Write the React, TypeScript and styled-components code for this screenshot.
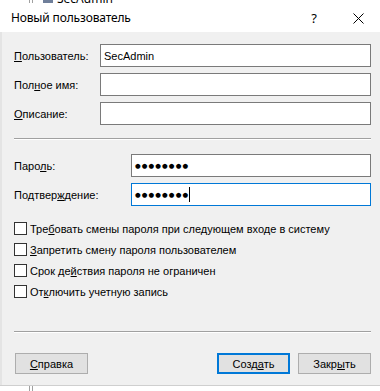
import React from "react";
import styled, { createGlobalStyle } from "styled-components";

const Global = createGlobalStyle`
  html, body { margin: 0; padding: 0; background: #ffffff; }
  body { width: 380px; height: 391px; overflow: hidden; }
  #root { width: 380px; }
`;

const Page = styled.div`
  width: 380px;
  height: 391px;
  display: flex;
  flex-direction: column;
  background: #ffffff;
  overflow: hidden;
`;

const BackStrip = styled.div<{ $h: number }>`
  height: ${(p) => p.$h}px;
  flex: none;
  display: flex;
  align-items: flex-end;
  overflow: hidden;
  background: #ffffff;
`;

const TreeLines = styled.div`
  width: 4px;
  height: 12px;
  margin-left: 29px;
  border-left: 1px solid #a0a0a0;
  border-right: 1px solid #a0a0a0;
  box-sizing: border-box;
  flex: none;
`;

const BackIcon = styled.div`
  width: 10px;
  height: 12px;
  margin-left: 10px;
  background: #6f7f9a;
  flex: none;
`;

const BackText = styled.span`
  font-family: "Noto Sans", sans-serif;
  font-size: 12px;
  line-height: 12px;
  color: #000;
  margin-left: 4px;
  margin-bottom: -2px;
`;

const Dialog = styled.div`
  flex: none;
  display: flex;
  flex-direction: column;
`;

const TitleBar = styled.div`
  height: 29px;
  display: flex;
  align-items: center;
  background: #ffffff;
  padding-left: 11px;
`;

const Title = styled.div`
  flex: 1;
  font-family: "Noto Sans", sans-serif;
  font-size: 12px;
  color: #000;
  letter-spacing: -0.15px;
`;

const TitleButton = styled.div`
  width: 44px;
  height: 29px;
  display: flex;
  align-items: center;
  justify-content: center;
  font-family: "Noto Sans", sans-serif;
  font-size: 13px;
  color: #000;
  padding-top: 1px;
  box-sizing: border-box;
`;

const Body = styled.div`
  background: #f0f0f0;
  border-left: 2px solid #e4e4e4;
  padding: 12px 9px 11px 12px;
  display: flex;
  flex-direction: column;
  font-family: "Liberation Sans", Arial, sans-serif;
  font-size: 11px;
  color: #000;
`;

const FormGrid = styled.div<{ $label: number }>`
  display: grid;
  grid-template-columns: ${(p) => p.$label}px 1fr;
  row-gap: 6px;
  align-items: center;
`;

const Label = styled.label`
  white-space: nowrap;
`;

const Field = styled.div<{ $focused?: boolean }>`
  height: 23px;
  box-sizing: border-box;
  border: 1px solid ${(p) => (p.$focused ? "#0078d7" : "#7a7a7a")};
  background: #ffffff;
  display: flex;
  align-items: center;
  padding-left: 3px;
  white-space: nowrap;
`;

const Dots = styled.span`
  font-family: "DejaVu Sans", sans-serif;
  font-size: 6.5px;
  letter-spacing: 1.1px;
  color: #000;
`;

const Caret = styled.span`
  display: inline-block;
  width: 1px;
  height: 15px;
  background: #000;
`;

const Separator = styled.div<{ $top: number; $bottom: number }>`
  height: 0;
  border-top: 1px solid #a0a0a0;
  border-bottom: 1px solid #ffffff;
  margin: ${(p) => p.$top}px 0 ${(p) => p.$bottom}px 0;
`;

const CheckList = styled.div`
  display: flex;
  flex-direction: column;
  gap: 8px;
  margin-top: 16px;
`;

const CheckRow = styled.div`
  display: flex;
  align-items: center;
  height: 13px;
  gap: 3px;
  white-space: nowrap;
`;

const Box = styled.span`
  width: 13px;
  height: 13px;
  box-sizing: border-box;
  border: 1px solid #333333;
  background: #ffffff;
  flex: none;
`;

const ButtonRow = styled.div`
  display: flex;
  align-items: center;
  padding-left: 1px;
`;

const Spacer = styled.div`
  flex: 1;
`;

const Button = styled.div<{ $default?: boolean; $first?: boolean }>`
  width: 73px;
  height: 21px;
  box-sizing: border-box;
  background: #e1e1e1;
  border: ${(p) => (p.$default ? "2px solid #0078d7" : "1px solid #adadad")};
  display: flex;
  align-items: center;
  justify-content: center;
  margin-left: ${(p) => (p.$default || p.$first ? 0 : 8)}px;
  font-size: 11px;
`;

const BottomShadow = styled.div`
  height: 1px;
  background: #cfcfcf;
  flex: none;
`;

const U = styled.span`
  text-decoration: underline;
  text-underline-offset: 1px;
`;

export default function App() {
  return (
    <Page>
      <Global />
      <BackStrip $h={3}>
        <TreeLines />
        <BackIcon />
        <BackText>SecAdmin</BackText>
      </BackStrip>
      <Dialog>
        <TitleBar>
          <Title>Новый пользователь</Title>
          <TitleButton>?</TitleButton>
          <TitleButton>
            <svg width="11" height="11" viewBox="0 0 11 11">
              <path d="M0.5 0.5 L10.5 10.5 M10.5 0.5 L0.5 10.5" stroke="#000" strokeWidth="1" fill="none" />
            </svg>
          </TitleButton>
        </TitleBar>
        <Body>
          <FormGrid $label={86}>
            <Label>
              <U>П</U>ользователь:
            </Label>
            <Field>SecAdmin</Field>
            <Label>
              Пол<U>н</U>ое имя:
            </Label>
            <Field />
            <Label>
              <U>О</U>писание:
            </Label>
            <Field />
          </FormGrid>
          <Separator $top={13} $bottom={14} />
          <FormGrid $label={117}>
            <Label>
              Паро<U>л</U>ь:
            </Label>
            <Field>
              <Dots>●●●●●●●●</Dots>
            </Field>
            <Label>
              Подтвер<U>ж</U>дение:
            </Label>
            <Field $focused>
              <Dots>●●●●●●●●</Dots>
              <Caret />
            </Field>
          </FormGrid>
          <CheckList>
            <CheckRow>
              <Box />
              <span>
                Тре<U>б</U>овать смены пароля при следующем входе в систему
              </span>
            </CheckRow>
            <CheckRow>
              <Box />
              <span>
                <U>З</U>апретить смену пароля пользователем
              </span>
            </CheckRow>
            <CheckRow>
              <Box />
              <span>
                Срок де<U>й</U>ствия пароля не ограничен
              </span>
            </CheckRow>
            <CheckRow>
              <Box />
              <span>
                От<U>к</U>лючить учетную запись
              </span>
            </CheckRow>
          </CheckList>
          <Separator $top={33} $bottom={20} />
          <ButtonRow>
            <Button $first>
              <span>
                <U>С</U>правка
              </span>
            </Button>
            <Spacer />
            <Button $default>
              <span>
                Созд<U>а</U>ть
              </span>
            </Button>
            <Button>
              <span>
                Закр<U>ы</U>ть
              </span>
            </Button>
          </ButtonRow>
        </Body>
        <BottomShadow />
      </Dialog>
      <BackStrip $h={10}>
        <TreeLines />
      </BackStrip>
    </Page>
  );
}
